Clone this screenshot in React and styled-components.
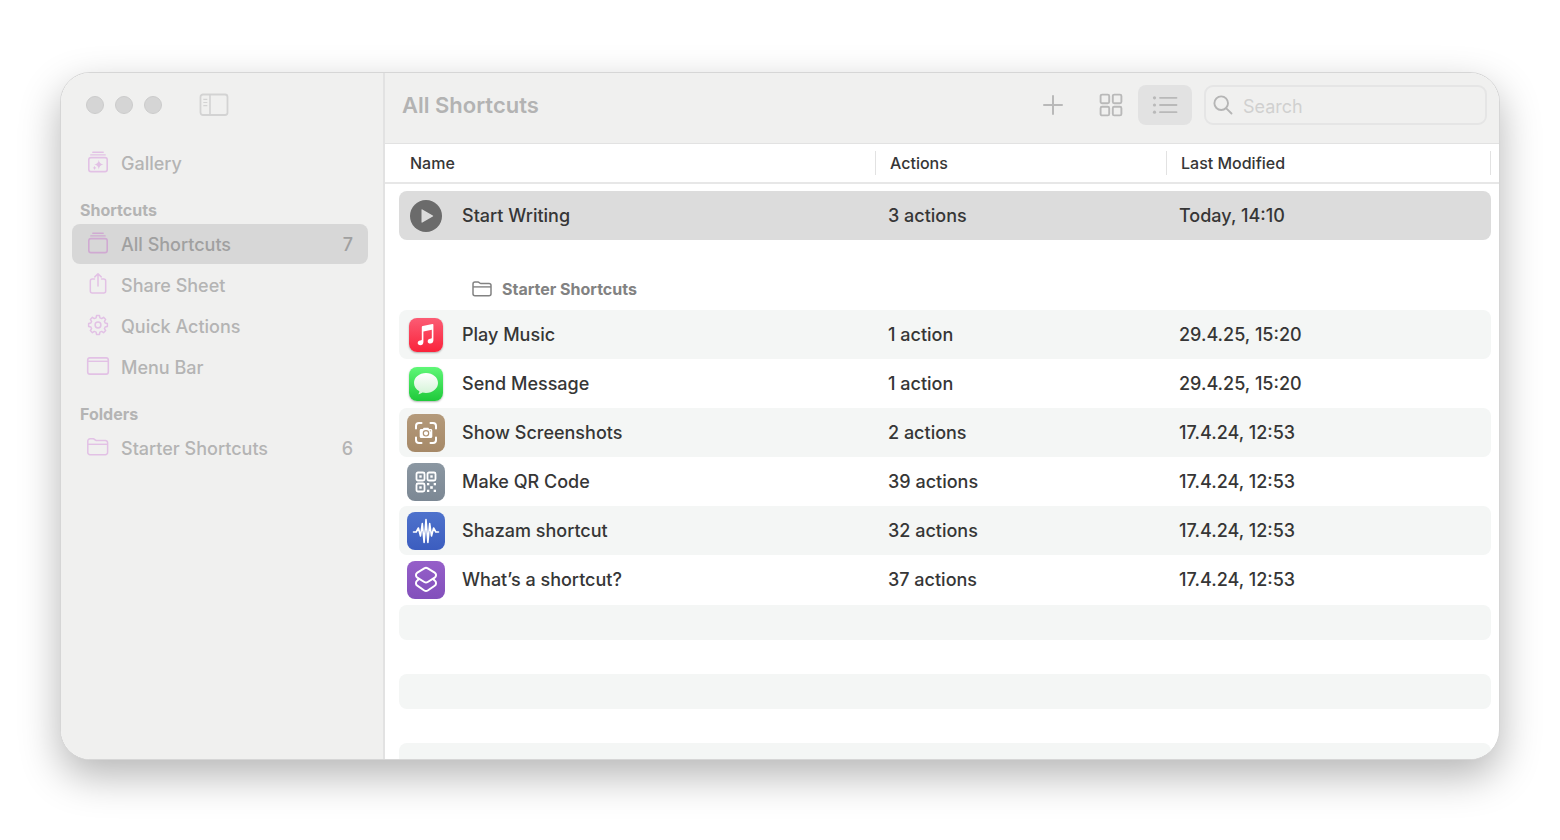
import React, { useState } from "react";
import styled, { createGlobalStyle } from "styled-components";

const App = () => {
  const [view, setView] = useState("list");
  const [section, setSection] = useState("All Shortcuts");

  return (
    <Page>
      <GlobalStyle />
      <Window>
        <Sidebar>
          <TitleBar>
            <Light aria-label="Close" />
            <Light aria-label="Minimize" />
            <Light aria-label="Zoom" />
            <SidebarToggle aria-label="Toggle sidebar">
              <SidebarIcon />
            </SidebarToggle>
          </TitleBar>
          <nav>
            {groups.map((group) => (
              <NavGroup key={group.title || "top"}>
                {group.title && <NavTitle>{group.title}</NavTitle>}
                {group.items.map(({ name, Icon, count }) => (
                  <NavItem
                    key={name}
                    $active={section === name}
                    onClick={() => setSection(name)}
                  >
                    <NavIcon $active={section === name}>
                      <Icon />
                    </NavIcon>
                    <NavLabel>{name}</NavLabel>
                    {count && <span>{count}</span>}
                  </NavItem>
                ))}
              </NavGroup>
            ))}
          </nav>
        </Sidebar>

        <Main>
          <Toolbar>
            <Title>All Shortcuts</Title>
            <ToolButton aria-label="New shortcut">
              <PlusIcon />
            </ToolButton>
            <ViewButtons>
              <ToolButton
                aria-label="Grid view"
                $active={view === "grid"}
                onClick={() => setView("grid")}
              >
                <GridIcon />
              </ToolButton>
              <ToolButton
                aria-label="List view"
                $active={view === "list"}
                onClick={() => setView("list")}
              >
                <ListIcon />
              </ToolButton>
            </ViewButtons>
            <SearchBox>
              <SearchIcon />
              <SearchInput type="search" placeholder="Search" aria-label="Search" />
            </SearchBox>
          </Toolbar>

          <Table>
            <Head>
              <Columns>
                <HeadCell>Name</HeadCell>
                <HeadCell>Actions</HeadCell>
                <HeadCell>Last Modified</HeadCell>
              </Columns>
            </Head>
            <Body>
              <ShortcutRow
                fill="#dcdcdc"
                name="Start Writing"
                actions="3 actions"
                modified="Today, 14:10"
                Icon={PlayIcon}
              />
              <GroupRow>
                <GroupCell scope="rowgroup">
                  <SmallFolderIcon />
                  Starter Shortcuts
                </GroupCell>
              </GroupRow>
              {shortcuts.map((shortcut, i) => (
                <ShortcutRow
                  key={shortcut.name}
                  fill={i % 2 ? "transparent" : "#f4f6f5"}
                  {...shortcut}
                />
              ))}
            </Body>
          </Table>
          <Stripes>
            <Stripe />
            <Stripe />
            <Stripe />
          </Stripes>
        </Main>
      </Window>
    </Page>
  );
};

const ShortcutRow = ({ fill, name, actions, modified, Icon }) => (
  <Row $fill={fill}>
    <NameCell>
      <IconSlot>
        <Icon />
      </IconSlot>
      {name}
    </NameCell>
    <Cell>{actions}</Cell>
    <Cell>{modified}</Cell>
  </Row>
);

/* Sidebar icons */

const SidebarIcon = () => (
  <svg width="30" height="24" viewBox="0 0 30 24" fill="none" stroke="currentColor">
    <rect x="1.500" y="1.500" width="27" height="20.500" rx="2.500" strokeWidth="1.800" />
    <path d="M11 1.500V22" strokeWidth="1.600" />
    <path d="M4.300 6.300h4M4.300 9.500h4M4.300 12.700h4" strokeWidth="1.200" />
  </svg>
);

const StackIcon = ({ children }) => (
  <svg width="22" height="22" viewBox="0 0 22 22" fill="none" stroke="currentColor">
    <rect x="1.8" y="6.6" width="18.4" height="14" rx="2.2" strokeWidth="1.6" />
    <path d="M3.8 3.9h14.4" strokeWidth="1.4" strokeLinecap="round" />
    <path d="M5.8 1.2h10.4" strokeWidth="1.4" strokeLinecap="round" />
    {children}
  </svg>
);

const GalleryIcon = () => (
  <StackIcon>
    <path
      d="M11.8 8.8q.5 4.300 4.600 4.800-4.100.5-4.600 4.800-.5-4.300-4.600-4.800 4.100-.5 4.600-4.800zM7.600 14.800q.3 2 2 2.200-1.700.2-2 2-.3-1.800-2-2 1.700-.2 2-2.200z"
      fill="currentColor"
      stroke="none"
    />
  </StackIcon>
);

const ShareIcon = () => (
  <svg
    width="22"
    height="24"
    viewBox="0 0 22 24"
    fill="none"
    stroke="currentColor"
    strokeWidth="1.5"
    strokeLinecap="round"
    strokeLinejoin="round"
  >
    <path d="M7.500 7H5.300a2 2 0 0 0-2 2v10a2 2 0 0 0 2 2h11.400a2 2 0 0 0 2-2V9a2 2 0 0 0-2-2h-2.200" />
    <path d="M11 14V2M7.800 4.900L11 1.700l3.200 3.200" />
  </svg>
);

// eight teeth around a ring, four points for each
const gearPath = Array.from({ length: 8 })
  .flatMap((_, i) =>
    [
      [-15, 7.4],
      [-9, 9.5],
      [9, 9.5],
      [15, 7.4],
    ].map(([offset, r]) => {
      const a = ((i * 45 + offset) * Math.PI) / 180;
      return `${(11 + r * Math.sin(a)).toFixed(2)} ${(11 - r * Math.cos(a)).toFixed(2)}`;
    })
  )
  .join("L");

const GearIcon = () => (
  <svg width="22" height="22" viewBox="0 0 22 22" fill="none" stroke="currentColor">
    <path d={`M${gearPath}Z`} strokeWidth="1.5" strokeLinejoin="round" />
    <circle cx="11" cy="11" r="2.9" strokeWidth="1.5" />
  </svg>
);

const MenuBarIcon = () => (
  <svg width="24" height="20" viewBox="0 0 24 20" fill="none" stroke="currentColor">
    <rect x="1.700" y="1.900" width="20.600" height="16.200" rx="2.200" strokeWidth="1.600" />
    <path d="M2 5.300h20" strokeWidth="1.400" />
  </svg>
);

const FolderIcon = () => (
  <svg width="24" height="20" viewBox="0 0 24 20" fill="none" stroke="currentColor">
    <path
      d="M1.800 15.500V4a2.200 2.200 0 0 1 2.200-2.200h3.200c1.400 0 1.800 1.700 3.200 1.700h9a2.200 2.200 0 0 1 2.200 2.200v9.800a2.200 2.200 0 0 1-2.200 2.200H4a2.200 2.200 0 0 1-2.200-2.200z"
      strokeWidth="1.500"
    />
    <path d="M2 7.300h19.400" strokeWidth="1.400" />
  </svg>
);

/* Toolbar icons */

const PlusIcon = () => (
  <svg width="22" height="22" viewBox="0 0 22 22" fill="none" stroke="currentColor">
    <path d="M11 2v18M2 11h18" strokeWidth="2" strokeLinecap="round" />
  </svg>
);

const GridIcon = () => (
  <svg
    width="24"
    height="24"
    viewBox="0 0 24 24"
    fill="none"
    stroke="currentColor"
    strokeWidth="1.9"
  >
    <rect x="1.600" y="1.600" width="8.600" height="8.600" rx="1.500" />
    <rect x="13.800" y="1.600" width="8.600" height="8.600" rx="1.500" />
    <rect x="1.600" y="13.800" width="8.600" height="8.600" rx="1.500" />
    <rect x="13.800" y="13.800" width="8.600" height="8.600" rx="1.500" />
  </svg>
);

const ListIcon = () => (
  <svg width="26" height="20" viewBox="0 0 26 20" stroke="currentColor">
    <path
      d="M8 2.800h16.500M8 10h16.500M8 17.200h16.500"
      strokeWidth="1.800"
      strokeLinecap="round"
    />
    <g fill="currentColor" stroke="none">
      <circle cx="2.500" cy="2.800" r="1.600" />
      <circle cx="2.500" cy="10" r="1.600" />
      <circle cx="2.500" cy="17.200" r="1.600" />
    </g>
  </svg>
);

const SearchIcon = () => (
  <svg
    width="20"
    height="20"
    viewBox="0 0 20 20"
    fill="none"
    stroke="#b5b5b5"
    strokeWidth="1.9"
    strokeLinecap="round"
  >
    <circle cx="8.200" cy="8.200" r="6.800" />
    <path d="M13.300 13.300l5.200 5.200" />
  </svg>
);

/* Table icons */

const PlayIcon = () => (
  <svg width="32" height="32" viewBox="0 0 32 32">
    <circle cx="16" cy="16" r="16" fill="#6b6b6b" />
    <path
      d="M11.500 10v12a.6.6 0 0 0 .9.500l10.400-5.900a.7.7 0 0 0 0-1.200L12.400 9.500a.6.6 0 0 0-.9.500z"
      fill="#dcdcdc"
    />
  </svg>
);

const SmallFolderIcon = () => (
  <svg width="20" height="16" viewBox="0 0 20 16" fill="none" stroke="#828282">
    <path
      d="M1 12.800V3a2 2 0 0 1 2-2h3c1.300 0 1.600 1.500 2.900 1.500H17a2 2 0 0 1 2 2v8.300a2 2 0 0 1-2 2H3a2 2 0 0 1-2-2z"
      strokeWidth="1.500"
    />
    <path d="M1 5.900h18" strokeWidth="1.400" />
  </svg>
);

const MusicIcon = () => (
  <AppTile $from="#fb5c74" $to="#fa233b">
    <svg width="34" height="34" viewBox="0 0 34 34" fill="#fff">
      <path d="M12.800 9c0-.6.400-1 1-1.100l9.600-1.900c.6-.1 1 .2 1 .8v15.500c0 2-1.300 3.300-3.100 3.300-1.500 0-2.600-.9-2.600-2.200 0-1.500 1-2.300 2.500-2.600l1-.2c.4-.1.600-.4.600-.9v-7.900l-8.400 1.700v10.500c0 2-1.300 3.300-3.100 3.300-1.500 0-2.600-.9-2.600-2.200 0-1.500 1-2.300 2.500-2.600l1-.2c.4-.1.600-.4.600-.9z" />
    </svg>
  </AppTile>
);

const MessageIcon = () => (
  <AppTile $from="#5ff777" $to="#1fc93a">
    <svg width="34" height="34" viewBox="0 0 34 34">
      <defs>
        <linearGradient id="bubble" x1="0" y1="0" x2="0" y2="1">
          <stop offset="0" stopColor="#fff" />
          <stop offset="1" stopColor="#d3f3d6" />
        </linearGradient>
      </defs>
      <path
        d="M17 6c6.700 0 12 4.400 12 10s-5.300 10-12 10c-1.200 0-2.400-.1-3.500-.4-1 .9-2.500 1.500-4.300 1.600.8-.8 1.200-1.800 1.200-3C7 22.400 5 19.400 5 16 5 10.400 10.300 6 17 6z"
        fill="url(#bubble)"
      />
    </svg>
  </AppTile>
);

const ScreenshotIcon = () => (
  <ShortcutTile $from="#b49a7b" $to="#a68968">
    <svg width="24" height="24" viewBox="0 0 24 24" fill="none" stroke="#fff">
      <path
        d="M2 7.500V5a3 3 0 0 1 3-3h2.500M16.500 2H19a3 3 0 0 1 3 3v2.500M22 16.500V19a3 3 0 0 1-3 3h-2.500M7.500 22H5a3 3 0 0 1-3-3v-2.500"
        strokeWidth="2"
        strokeLinecap="round"
      />
      <path
        d="M7.200 8h1.600l.9-1.300h4.600l.9 1.300h1.600c.9 0 1.500.6 1.500 1.500v6c0 .9-.6 1.500-1.500 1.500H7.200c-.9 0-1.500-.6-1.500-1.500v-6c0-.9.6-1.500 1.500-1.500z"
        fill="#fff"
        stroke="none"
      />
      <circle cx="12" cy="12.300" r="2.700" stroke="#ad9172" strokeWidth="1.200" />
      <circle cx="16.300" cy="9.800" r=".6" fill="#ad9172" stroke="none" />
    </svg>
  </ShortcutTile>
);

const QrIcon = () => (
  <ShortcutTile $from="#8b97a2" $to="#7c8894">
    <svg width="24" height="24" viewBox="0 0 24 24" fill="none" stroke="#fff">
      <g strokeWidth="1.800">
        <rect x="2.500" y="2.500" width="8" height="8" rx="1.500" />
        <rect x="13.500" y="2.500" width="8" height="8" rx="1.500" />
        <rect x="2.500" y="13.500" width="8" height="8" rx="1.500" />
      </g>
      <g fill="#fff" stroke="none">
        <rect x="5.300" y="5.300" width="2.400" height="2.400" />
        <rect x="16.300" y="5.300" width="2.400" height="2.400" />
        <rect x="5.300" y="16.300" width="2.400" height="2.400" />
        <rect x="13" y="13" width="2.300" height="2.300" />
        <rect x="19.700" y="13" width="2.300" height="2.300" />
        <rect x="16.200" y="16.200" width="2.600" height="2.600" />
        <rect x="13" y="19.700" width="2.300" height="2.300" />
        <rect x="19.700" y="19.700" width="2.300" height="2.300" />
      </g>
    </svg>
  </ShortcutTile>
);

const WaveIcon = () => (
  <ShortcutTile $from="#4e72cc" $to="#3c5dbf">
    <svg
      width="28"
      height="28"
      viewBox="0 0 28 28"
      fill="none"
      stroke="#fff"
      strokeWidth="1.600"
      strokeLinecap="round"
      strokeLinejoin="round"
    >
      <path d="M1.500 15h2.700l2.200-4 2.100 8 1.800-12.500 1.800 19L14 2.500l1.900 23 1.800-19L19.500 19l2.100-8 2.200 4h2.700" />
    </svg>
  </ShortcutTile>
);

const LayersIcon = () => (
  <ShortcutTile $from="#955fc9" $to="#8250bb">
    <svg
      width="26"
      height="28"
      viewBox="0 0 26 28"
      fill="none"
      stroke="#fff"
      strokeWidth="2"
      strokeLinejoin="round"
    >
      <path d="M11.300 2.300L4.300 6.600c-1.800 1.200-1.800 3.800 0 5l7 4.400c1.100.7 2.300.7 3.400 0l7-4.400c1.800-1.200 1.800-3.800 0-5l-7-4.300c-1.100-.7-2.300-.7-3.400 0z" />
      <path d="M6 13l-1.700 1.500c-1.800 1.400-1.800 4 0 5.200l7 4.800c1.100.7 2.300.7 3.400 0l7-4.800c1.800-1.200 1.800-3.800 0-5.200L20 13" />
    </svg>
  </ShortcutTile>
);

const groups = [
  { title: "", items: [{ name: "Gallery", Icon: GalleryIcon }] },
  {
    title: "Shortcuts",
    items: [
      { name: "All Shortcuts", Icon: StackIcon, count: 7 },
      { name: "Share Sheet", Icon: ShareIcon },
      { name: "Quick Actions", Icon: GearIcon },
      { name: "Menu Bar", Icon: MenuBarIcon },
    ],
  },
  {
    title: "Folders",
    items: [{ name: "Starter Shortcuts", Icon: FolderIcon, count: 6 }],
  },
];

const shortcuts = [
  { name: "Play Music", actions: "1 action", modified: "29.4.25, 15:20", Icon: MusicIcon },
  { name: "Send Message", actions: "1 action", modified: "29.4.25, 15:20", Icon: MessageIcon },
  { name: "Show Screenshots", actions: "2 actions", modified: "17.4.24, 12:53", Icon: ScreenshotIcon },
  { name: "Make QR Code", actions: "39 actions", modified: "17.4.24, 12:53", Icon: QrIcon },
  { name: "Shazam shortcut", actions: "32 actions", modified: "17.4.24, 12:53", Icon: WaveIcon },
  { name: "What’s a shortcut?", actions: "37 actions", modified: "17.4.24, 12:53", Icon: LayersIcon },
];

const GlobalStyle = createGlobalStyle`
  *, *::before, *::after {
    box-sizing: border-box;
  }
  body {
    margin: 0;
    background: #fff;
    color: #363636;
    font-family: Inter, "Liberation Sans", sans-serif;
    font-size: 18px;
    font-weight: 500;
  }
  button, input {
    font: inherit;
    color: inherit;
  }
  button {
    border: 0;
    padding: 0;
    background: none;
  }
  svg {
    display: block;
    flex: none;
  }
`;

const Page = styled.div`
  display: flex;
  height: 100vh;
  padding: 72px 60px 80px;
`;

const Window = styled.div`
  display: flex;
  flex: 1;
  min-width: 0;
  overflow: hidden;
  border: 1px solid #d6d6d6;
  border-radius: 30px;
  background: #fff;
  box-shadow: 0 16px 40px rgba(0, 0, 0, 0.29);
`;

const Sidebar = styled.aside`
  flex: none;
  width: 324px;
  padding: 0 15px 0 11px;
  border-right: 2px solid #e2e2e2;
  background: #f0f0ef;
  color: #b4b4b4;
`;

const TitleBar = styled.div`
  display: flex;
  align-items: center;
  gap: 11px;
  height: 64px;
  padding: 0 14px;
`;

const Light = styled.button`
  width: 18px;
  height: 18px;
  border: 1px solid #cbcbcb;
  border-radius: 50%;
  background: #d5d5d5;
`;

const SidebarToggle = styled.button`
  margin-left: 26px;
  color: #d3d3d3;
`;

const NavGroup = styled.div`
  display: flex;
  flex-direction: column;
  gap: 1px;
  &:first-child {
    padding-top: 6px;
  }
`;

const NavTitle = styled.h2`
  margin: 0;
  padding: 16px 8px 2px;
  font-size: 16px;
  font-weight: 700;
  line-height: 22px;
`;

const NavItem = styled.button`
  display: flex;
  align-items: center;
  gap: 11px;
  height: 40px;
  padding: 0 15px 0 14px;
  border-radius: 8px;
  background: ${(props) => (props.$active ? "#d7d7d7" : "transparent")};
  color: ${(props) => (props.$active ? "#a0a0a0" : "#b4b4b4")};
  text-align: left;
`;

const NavIcon = styled.span`
  display: flex;
  justify-content: center;
  width: 24px;
  padding-bottom: 2px;
  color: ${(props) => (props.$active ? "#d0aad2" : "#e2c1e5")};
`;

const NavLabel = styled.span`
  flex: 1;
`;

const Main = styled.main`
  display: flex;
  flex: 1;
  flex-direction: column;
  min-width: 0;
`;

const Toolbar = styled.header`
  display: flex;
  flex: none;
  align-items: center;
  height: 71px;
  padding: 0 12px 6px 17px;
  border-bottom: 1px solid #e2e2e2;
  background: #f0f0ef;
`;

const Title = styled.h1`
  flex: 1;
  margin: 0;
  color: #b3b3b3;
  font-size: 22px;
  font-weight: 600;
`;

const ToolButton = styled.button`
  display: flex;
  align-items: center;
  justify-content: center;
  width: 54px;
  height: 40px;
  border-radius: 8px;
  background: ${(props) => (props.$active ? "#e2e2e2" : "transparent")};
  color: #b9b9b9;
`;

const ViewButtons = styled.div`
  display: flex;
  margin: 0 12px 0 4px;
`;

const SearchBox = styled.label`
  display: flex;
  align-items: center;
  gap: 10px;
  width: 283px;
  height: 40px;
  padding: 0 7px;
  border: 2px solid #e5e5e5;
  border-radius: 9px;
`;

const SearchInput = styled.input`
  flex: 1;
  min-width: 0;
  padding: 3px 0 0;
  border: 0;
  outline: 0;
  background: none;
  font-weight: 400;
  &::placeholder {
    color: #d0d0d0;
  }
`;

const Table = styled.table`
  display: block;
  flex: none;
`;

const Head = styled.thead`
  display: block;
  padding: 7px 8px 7px 14px;
  border-bottom: 2px solid #e7e7e7;
`;

const Columns = styled.tr`
  display: grid;
  grid-template-columns: 476fr 291fr 325fr;
  align-items: center;
`;

const HeadCell = styled.th`
  padding: 0 14px;
  border-left: 1px solid #e2e2e2;
  font-size: 16px;
  font-weight: 500;
  line-height: 24px;
  text-align: left;
  &:first-child {
    padding-left: 10px;
    border-left-color: transparent;
  }
  &:last-child {
    border-right: 1px solid #e2e2e2;
  }
`;

const Body = styled.tbody`
  display: block;
  padding: 7px 8px 1px 14px;
`;

const Row = styled(Columns)`
  height: 49px;
  border-radius: 8px;
  background: ${(props) => props.$fill};
`;

const Cell = styled.td`
  padding: 0 13px;
  line-height: 24px;
`;

const NameCell = styled(Cell)`
  display: flex;
  align-items: center;
  gap: 17px;
  padding: 0 8px;
`;

const IconSlot = styled.span`
  display: flex;
  justify-content: center;
  width: 38px;
`;

const GroupRow = styled.tr`
  display: block;
  padding: 37px 73px 9px;
`;

const GroupCell = styled.th`
  display: flex;
  align-items: center;
  gap: 10px;
  padding: 0;
  color: #828282;
  font-size: 16px;
  font-weight: 700;
  line-height: 24px;
`;

const Tile = styled.span`
  display: flex;
  align-items: center;
  justify-content: center;
  background: linear-gradient(${(props) => props.$from}, ${(props) => props.$to});
`;

const AppTile = styled(Tile)`
  width: 34px;
  height: 34px;
  border-radius: 8px;
  box-shadow: 0 1px 2px rgba(0, 0, 0, 0.3);
`;

const ShortcutTile = styled(Tile)`
  width: 38px;
  height: 38px;
  border-radius: 8px;
`;

const Stripes = styled.div`
  display: flex;
  flex: 1;
  flex-direction: column;
  gap: 34px;
  min-height: 0;
  padding: 0 8px 0 14px;
`;

const Stripe = styled.div`
  flex: none;
  height: 35px;
  border-radius: 8px;
  background: #f4f6f5;
`;

export default App;
